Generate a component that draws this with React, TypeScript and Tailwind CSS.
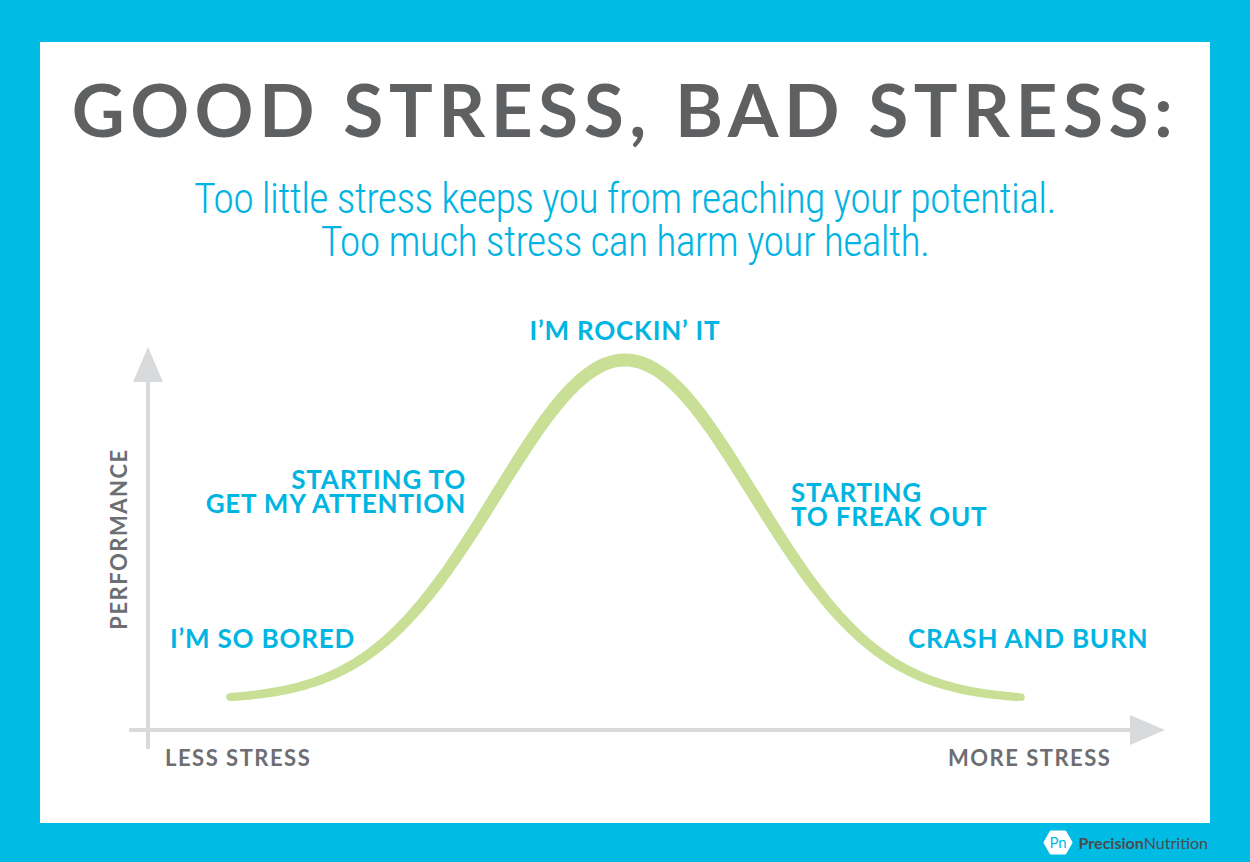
import React from "react";

// bell curve in chart coordinates (chart origin = page 40,300)
const MU = 585;
const BASE = 400;
const AMP = 340;
const SIGMA = 128;

function curveY(x: number) {
  return BASE - AMP * Math.exp(-((x - MU) ** 2) / (2 * SIGMA * SIGMA));
}

// ribbon that is thicker at the peak than at the ends
function buildRibbon() {
  const top: string[] = [];
  const bottom: string[] = [];
  for (let x = 190; x <= 981; x += 3) {
    const y = curveY(x);
    const dy = curveY(x + 0.5) - curveY(x - 0.5);
    const len = Math.sqrt(1 + dy * dy);
    const nx = -dy / len;
    const ny = 1 / len;
    const g = Math.exp(-((x - MU) ** 2) / (2 * 200 * 200));
    const w = (7.5 + 5.5 * g) / 2;
    top.push(`${(x - nx * w).toFixed(1)},${(y - ny * w).toFixed(1)}`);
    bottom.unshift(`${(x + nx * w).toFixed(1)},${(y + ny * w).toFixed(1)}`);
  }
  return `M${top.join(" L")} L${bottom.join(" L")} Z`;
}

const ribbon = buildRibbon();

const label =
  "absolute font-[Lato,sans-serif] text-[26px] font-bold tracking-[0.8px] text-[#00b5e2]";
const axisLabel =
  "absolute font-[Lato,sans-serif] text-[22px] font-bold leading-none tracking-[1.5px] text-[#6d6e71]";

function Chart() {
  return (
    <div className="relative h-[523px] w-full">
      <svg className="absolute inset-0" width="1170" height="523" viewBox="0 0 1170 523">
        {/* axes */}
        <line x1="108" y1="80" x2="108" y2="449" stroke="#d9dadc" strokeWidth="4" />
        <polygon points="93,82 123,82 108,47" fill="#d9dadc" />
        <line x1="89" y1="430" x2="1092" y2="430" stroke="#d9dadc" strokeWidth="4" />
        <polygon points="1090,415 1090,445 1125,430" fill="#d9dadc" />
        {/* curve */}
        <path d={ribbon} fill="#c9df96" />
        <circle cx="190" cy={curveY(190)} r="3.75" fill="#c9df96" />
        <circle cx="981" cy={curveY(981)} r="3.75" fill="#c9df96" />
      </svg>

      <div className={`${label} inset-x-0 top-[17px] text-center leading-none`}>
        I’M ROCKIN’ IT
      </div>
      <div className={`${label} right-[744px] top-[167px] text-right leading-[24px]`}>
        STARTING TO
        <br />
        GET MY ATTENTION
      </div>
      <div className={`${label} left-[751px] top-[180px] leading-[24px]`}>
        STARTING
        <br />
        TO FREAK OUT
      </div>
      <div className={`${label} left-[130px] top-[325px] leading-none`}>I’M SO BORED</div>
      <div className={`${label} left-[868px] top-[325px] leading-none`}>CRASH AND BURN</div>

      <div
        className={`${axisLabel} left-[79px] top-[239px] -translate-x-1/2 -translate-y-1/2 -rotate-90 whitespace-nowrap`}
      >
        PERFORMANCE
      </div>
      <div className={`${axisLabel} left-[125px] top-[447px]`}>LESS STRESS</div>
      <div className={`${axisLabel} left-[908px] top-[447px] tracking-[1.2px]`}>MORE STRESS</div>
    </div>
  );
}

function Logo() {
  return (
    <div className="flex items-center gap-[6px]">
      <svg width="30" height="25" viewBox="0 0 30 25">
        <path
          d="M8 2 L22 2 L28 12.5 L22 23 L8 23 L2 12.5 Z"
          fill="#ffffff"
          stroke="#ffffff"
          strokeWidth="3"
          strokeLinejoin="round"
        />
        <text x="15" y="18" textAnchor="middle" fontSize="15" fill="#00bbe4" fontFamily="Lato, sans-serif">
          Pn
        </text>
      </svg>
      <div className="font-[Lato,sans-serif] text-[16px] leading-none text-[#4b4c4f]">
        <span className="font-bold">Precision</span>
        <span>Nutrition</span>
      </div>
    </div>
  );
}

export default function App() {
  return (
    <div className="flex h-[862px] w-full flex-col bg-[#00bbe4] px-[40px] pt-[42px]">
      <div className="flex h-[781px] flex-col items-center bg-white pt-[31px]">
        <h1 className="whitespace-nowrap font-[Lato,sans-serif] text-[73px] font-bold leading-none tracking-[5.5px] text-[#5f6062]">
          GOOD STRESS, BAD STRESS:
        </h1>
        <p className="mt-[31px] text-center font-[Roboto,sans-serif] text-[42px] font-light leading-[43px] tracking-[-0.7px] text-[#00b3e3] font-stretch-condensed">
          Too little stress keeps you from reaching your potential.
          <br />
          Too much stress can harm your health.
        </p>
        <div className="mt-auto w-full">
          <Chart />
        </div>
      </div>
      <div className="flex flex-1 items-center justify-end pr-[2px]">
        <Logo />
      </div>
    </div>
  );
}
